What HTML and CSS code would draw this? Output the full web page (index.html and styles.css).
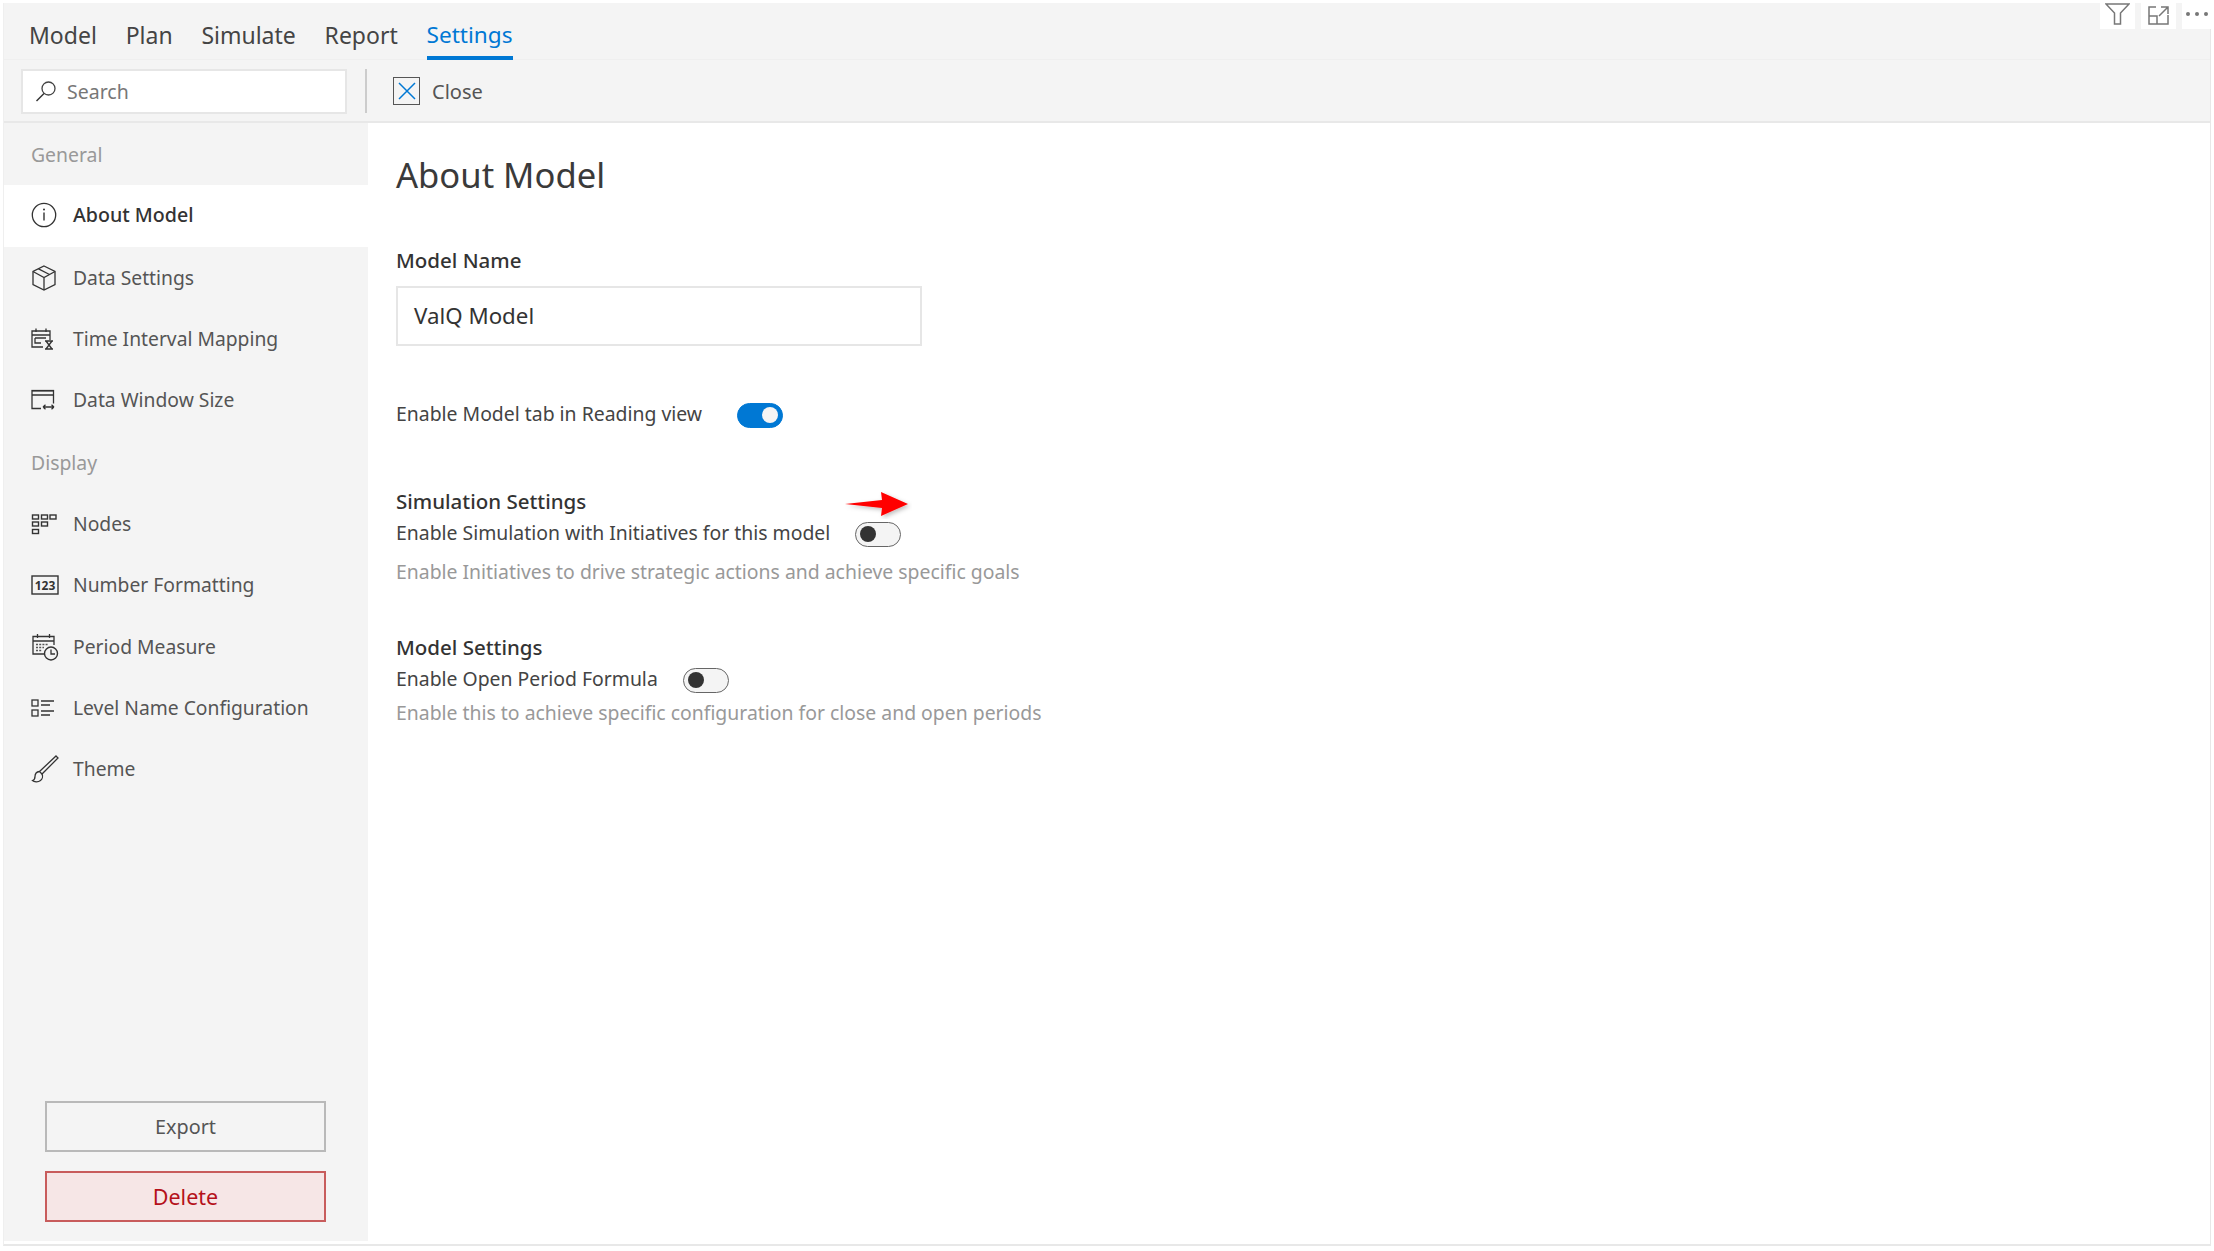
FILE: index.html
```html
<!DOCTYPE html>
<html lang="en">
<head>
<meta charset="utf-8">
<title>About Model</title>
<link rel="stylesheet" href="styles.css">
</head>
<body>
<div class="frame">
  <header class="head">
    <nav class="tabs">
      <span class="tab">Model</span>
      <span class="tab">Plan</span>
      <span class="tab">Simulate</span>
      <span class="tab">Report</span>
      <span class="tab active">Settings</span>
    </nav>
    <div class="toolbar">
      <div class="search">
        <svg class="search-icon" width="22" height="22" viewBox="0 0 22 22"><circle cx="13.500" cy="8.500" r="6.500" fill="none" stroke="#444" stroke-width="1.300"/><path d="M9 13.500L1.500 21" stroke="#333" stroke-width="1.400" fill="none"/></svg>
        <span>Search</span>
      </div>
      <div class="divider"></div>
      <div class="close">
        <span class="close-box"><svg width="20" height="20" viewBox="0 0 20 20"><path d="M2 2L18 18M18 2L2 18" stroke="#0078d4" stroke-width="1.500" fill="none"/></svg></span>
        <span>Close</span>
      </div>
    </div>
  </header>
  <div class="body">
    <aside class="side">
      <div class="group g1">General</div>
      <div class="item on h62">
        <svg width="26" height="26" viewBox="0 0 26 26"><circle cx="13" cy="13" r="11.700" fill="none" stroke="#333" stroke-width="1.300"/><path d="M13 10.500V18.500" stroke="#333" stroke-width="1.400"/><circle cx="13" cy="7.600" r="1" fill="#333"/></svg>
        <span>About Model</span>
      </div>
      <div class="item h63">
        <svg width="26" height="26" viewBox="0 0 26 26" fill="none" stroke="#333" stroke-width="1.300"><path d="M13 1L24 6.500V19.500L13 25L2 19.500V6.500Z"/><path d="M2 6.500L13 12.500L24 6.500M13 12.500V25M7.500 3.800L18.500 9.500"/></svg>
        <span>Data Settings</span>
      </div>
      <div class="item h60">
        <svg width="24" height="22" viewBox="0 0 24 22" fill="none" stroke="#333" stroke-width="1.300"><path d="M19 12V3H1V19H12M1 7H19M5 0.500V4M15 0.500V4M4 10H15M4 10V15H10"/><path d="M14 13H22M14 21H22M15 13L21 21M21 13L15 21"/></svg>
        <span>Time Interval Mapping</span>
      </div>
      <div class="item h62">
        <svg width="24" height="21" viewBox="0 0 24 21" fill="none" stroke="#333" stroke-width="1.300"><path d="M22.500 14V1H1V19H10"/><path d="M1 1.200H22.500M1 5.500H22.500" stroke-width="1.600"/><path d="M12 17.500H23M12 17.500L14.500 15.300M12 17.500L14.500 19.700M23 17.500L20.500 15.300M23 17.500L20.500 19.700"/></svg>
        <span>Data Window Size</span>
      </div>
      <div class="group g2">Display</div>
      <div class="item h61">
        <svg width="26" height="26" viewBox="0 0 26 26" fill="none" stroke="#333" stroke-width="1.400"><rect x="1.500" y="4" width="6" height="4"/><rect x="10.500" y="4" width="6" height="4"/><rect x="19" y="4" width="6" height="4"/><rect x="1.500" y="11" width="6" height="4"/><rect x="10.500" y="11" width="6" height="4"/><rect x="1.500" y="18.500" width="6" height="4"/></svg>
        <span>Nodes</span>
      </div>
      <div class="item h62">
        <svg width="28" height="20" viewBox="0 0 28 20"><rect x="1" y="1" width="26" height="18" fill="none" stroke="#333" stroke-width="1.400"/><text class="num" x="14" y="15">123</text></svg>
        <span>Number Formatting</span>
      </div>
      <div class="item h61">
        <svg width="28" height="28" viewBox="0 0 28 28" fill="none" stroke="#333" stroke-width="1.300"><path d="M14 21H2V3.500H23V12M2 8H23M6.500 1V5M18.500 1V5"/><path d="M5 11.500H17M5 14.500H13M5 17.500H11" stroke-dasharray="2 1.200" stroke="#555"/><circle cx="20" cy="20.500" r="6.500" fill="#f4f4f4" stroke-width="1.400"/><path d="M20 16.500V21H24"/></svg>
        <span>Period Measure</span>
      </div>
      <div class="item h61">
        <svg width="26" height="18" viewBox="0 0 26 18" fill="none" stroke="#333" stroke-width="1.300"><rect x="1" y="1" width="6" height="6"/><rect x="1" y="11" width="6" height="6"/><path d="M10 2H23M10 6H19M10 12H23M10 16H19"/></svg>
        <span>Level Name Configuration</span>
      </div>
      <div class="item h61">
        <svg width="28" height="28" viewBox="0 0 28 28" fill="none" stroke="#333" stroke-width="1.300"><path d="M25 1L27 3L11 19L8.500 16.500Z"/><path d="M8.500 16.500C5 17 4 19 4 21.500C4 24 3 25 1.500 25.500C3 27 7 27.500 9.500 25.500C11.500 24 12 21 11 19"/></svg>
        <span>Theme</span>
      </div>
      <div class="actions">
        <button class="btn">Export</button>
        <button class="btn danger">Delete</button>
      </div>
    </aside>
    <main class="main">
      <h1 class="title">About Model</h1>
      <label class="lbl">Model Name</label>
      <div class="field">ValQ Model</div>
      <div class="row first">
        <span>Enable Model tab in Reading view</span>
        <span class="toggle on"></span>
      </div>
      <div class="sect sim">
        <h2>Simulation Settings</h2>
        <div class="row"><span>Enable Simulation with Initiatives for this model</span><span class="toggle"></span></div>
        <p class="hint h1">Enable Initiatives to drive strategic actions and achieve specific goals</p>
        <svg class="arrow" width="68" height="28" viewBox="0 0 68 28"><defs><filter id="s" x="-20%" y="-40%" width="150%" height="200%"><feDropShadow dx="2" dy="2" stdDeviation="2" flood-color="#000" flood-opacity=".25"/></filter></defs><path d="M1 13L38 9L37 1L64 13L37 25L38 17Z" fill="#f00" filter="url(#s)"/></svg>
      </div>
      <div class="sect model">
        <h2>Model Settings</h2>
        <div class="row"><span>Enable Open Period Formula</span><span class="toggle"></span></div>
        <p class="hint h2">Enable this to achieve specific configuration for close and open periods</p>
      </div>
    </main>
  </div>
</div>
<div class="corner">
  <span class="cbtn"><svg width="25" height="22" viewBox="0 0 25 22" fill="none" stroke="#777" stroke-width="1.500"><path d="M1 1H24L15.500 10V21H9.500V10Z"/></svg></span>
  <span class="cbtn"><svg class="expand" width="21" height="19" viewBox="0 0 21 19" fill="none" stroke="#777" stroke-width="1.500"><path d="M8 1H1V18H20V9M1 10H9V18M13 1H20V8M20 1L11 10"/></svg></span>
  <span class="cbtn dots"><i></i><i></i><i></i></span>
</div>
</body>
</html>
```
FILE: styles.css
```css
* { box-sizing: border-box; }
html, body { margin: 0; height: 100%; background: #fff; overflow: hidden; }
body { position: relative; width: 2214px; height: 1251px; font-family: "Noto Sans", "Open Sans", sans-serif; color: #333; }
.frame { margin: 3px 3px 0 3px; height: 1243px; display: flex; flex-direction: column; background: #fff; border-bottom: 2px solid #e8e8e8; border-left: 1px solid #efefef; border-right: 1px solid #e8e8e8; }
.head { background: #f4f4f4; height: 120px; border-bottom: 2px solid #e8e8e8; flex: none; }
.tabs { display: flex; height: 57px; padding-left: 25px; gap: 28.800px; border-bottom: 1px solid #efefef; }
.tab { font-size: 23px; height: 57px; padding-top: 7px; line-height: 50px; color: #444; }
.tab.active { color: #0078d4; border-bottom: 4px solid #0078d4; font-size: 22.600px; }
.toolbar { display: flex; align-items: center; height: 62px; padding-left: 17px; }
.search { width: 326px; height: 45px; background: #fff; border: 2px solid #e6e6e6; display: flex; align-items: center; gap: 10px; padding-left: 12px; font-size: 19.500px; color: #777; }
.divider { width: 2px; height: 44px; background: #ccc; margin-left: 18px; }
.close { display: flex; align-items: center; gap: 12px; margin-left: 26px; font-size: 20px; color: #555; }
.close-box { width: 27px; height: 28px; border: 1.500px solid #555; display: flex; align-items: center; justify-content: center; }
.body { flex: 1; display: flex; min-height: 0; }
.side { width: 364px; background: #f4f4f4; display: flex; flex-direction: column; margin-bottom: 3px; flex: none; }
.group { font-size: 19.400px; color: #999; padding-left: 27px; display: flex; align-items: center; }
.g1 { height: 62px; padding-top: 1px; }
.g2 { height: 62px; padding-bottom: 2px; }
.item { display: flex; align-items: center; padding: 0 0 3px 25px; font-size: 19.300px; color: #555; position: relative; }
.item svg { position: absolute; left: 27px; top: calc(50% - 1px); transform: translateY(-50%); }
.item span { margin-left: 44px; }
.item.on { background: #fff; color: #333; font-weight: 500; font-size: 19.600px; }
.h60 { height: 60px; } .h61 { height: 61px; } .h62 { height: 62px; } .h63 { height: 63px; }
.num { font: 700 12px "Noto Sans", sans-serif; fill: #333; text-anchor: middle; }
.actions { margin-top: auto; padding: 0 41px 19px 41px; display: flex; flex-direction: column; gap: 19px; }
.btn { height: 51px; width: 281px; background: transparent; border: 2px solid #b9b9b9; font: 19.800px "Noto Sans", sans-serif; color: #555; }
.btn.danger { background: #f6e6e6; border-color: #c85c5c; color: #b5121b; font-size: 21.500px; }
.main { flex: 1; padding: 0 0 0 28px; background: #fff; }
.title { font-size: 34.600px; font-weight: 400; margin: 28px 0 0; line-height: 48px; color: #3a3a3a; }
.lbl { display: block; margin-top: 47px; font-size: 20.500px; font-weight: 500; line-height: 28px; }
.field { margin-top: 12px; width: 526px; height: 60px; border: 2px solid #e6e6e6; font-size: 22.300px; line-height: 56px; padding-left: 16px; }
.row { display: flex; align-items: center; font-size: 19.400px; color: #444; gap: 25px; height: 30px; }
.row.first { margin-top: 52px; gap: 35px; }
.sect { position: relative; }
.sect h2 { margin: 0 0 2px; font-size: 20.500px; font-weight: 500; line-height: 28px; color: #333; }
.sim { margin-top: 59px; }
.model { margin-top: 47px; }
.hint { margin: 0; font-size: 19.400px; color: #999; line-height: 28px; }
.h1 { margin-top: 11px; }
.h2 { margin-top: 6px; }
.arrow { position: absolute; left: 448px; top: 4px; }
.toggle { width: 46px; height: 25px; border-radius: 13px; background: #f4f4f4; border: 1.500px solid #666; position: relative; flex: none; top: 2px; }
.toggle::after { content: ""; position: absolute; left: 4px; top: 3px; width: 16px; height: 16px; border-radius: 50%; background: #333; }
.toggle.on { background: #0078d4; border-color: #0078d4; }
.toggle.on::after { left: auto; right: 4px; background: #f4f4f4; }
.corner { position: absolute; right: 2px; top: 3px; display: flex; gap: 6px; }
.cbtn { width: 35px; height: 26px; background: #fff; display: flex; align-items: flex-start; justify-content: center; overflow: hidden; }
.expand { margin-top: 3px; }
.dots { width: 30px; gap: 5px; padding-top: 9px; }
.dots i { width: 4px; height: 4px; border-radius: 50%; background: #777; }
```
